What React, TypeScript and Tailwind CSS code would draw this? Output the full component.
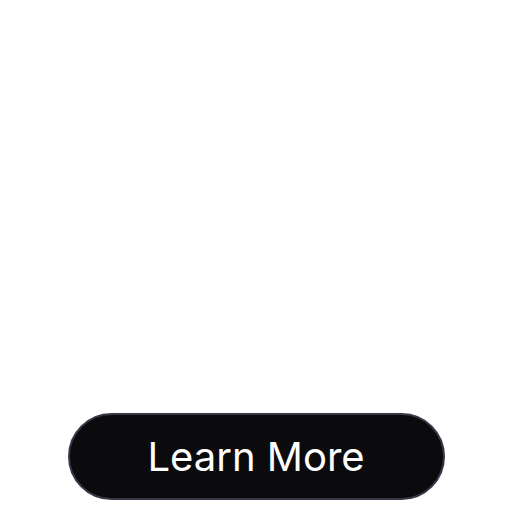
export default function App() {
  return (
    <div className="flex h-[512px] w-full flex-col items-center justify-end bg-white pb-[12px]">
      <button
        className="flex h-[87px] w-[377px] items-center justify-center rounded-full border-2 border-[#3a3548] bg-[#0b0b0d] text-[40px] text-white"
        style={{ fontFamily: 'Inter, "Noto Sans", sans-serif' }}
      >
        Learn More
      </button>
    </div>
  );
}
